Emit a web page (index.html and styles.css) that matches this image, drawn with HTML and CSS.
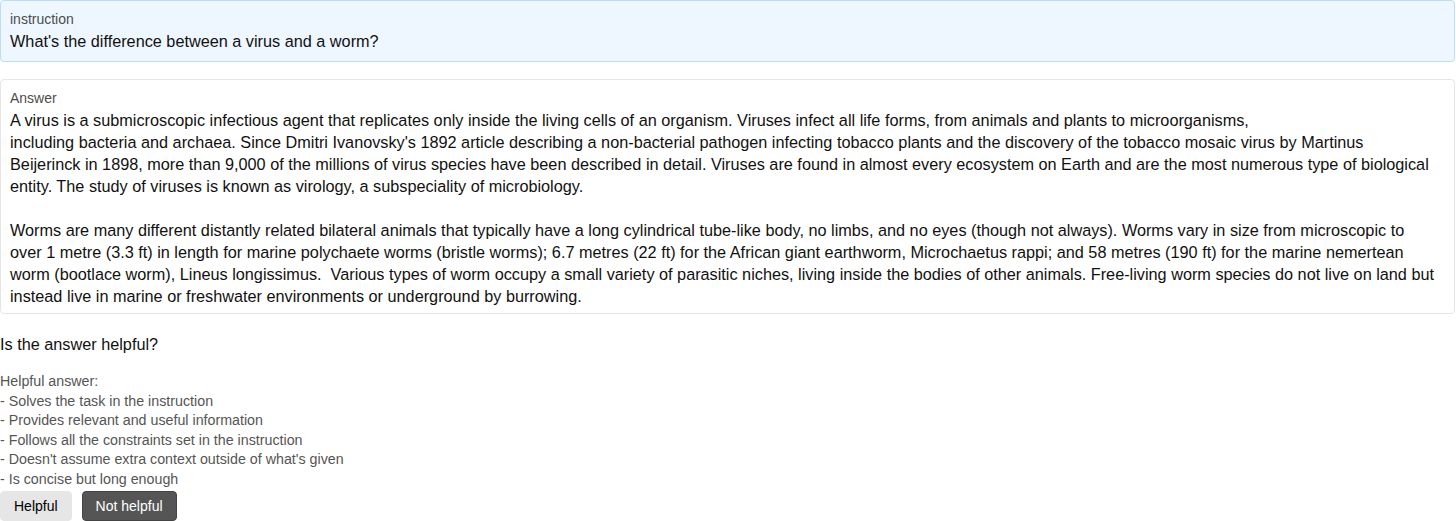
FILE: index.html
```html
<!DOCTYPE html>
<html lang="en">
<head>
<meta charset="utf-8">
<title>Answer evaluation</title>
<link rel="stylesheet" href="styles.css">
</head>
<body>
<main class="page">
  <section class="card card-instruction">
    <div class="label">instruction</div>
    <div class="text">What's the difference between a virus and a worm?</div>
  </section>
  <section class="card card-answer">
    <div class="label">Answer</div>
    <p class="text">A virus is a submicroscopic infectious agent that replicates only inside the living cells of an organism. Viruses infect all life forms, from animals and plants to microorganisms,<br>including bacteria and archaea. Since Dmitri Ivanovsky's 1892 article describing a non-bacterial pathogen infecting tobacco plants and the discovery of the tobacco mosaic virus by Martinus<br>Beijerinck in 1898, more than 9,000 of the millions of virus species have been described in detail. Viruses are found in almost every ecosystem on Earth and are the most numerous type of biological<br>entity. The study of viruses is known as virology, a subspeciality of microbiology.</p>
    <p class="text">Worms are many different distantly related bilateral animals that typically have a long cylindrical tube-like body, no limbs, and no eyes (though not always). Worms vary in size from microscopic to<br>over 1 metre (3.3 ft) in length for marine polychaete worms (bristle worms); 6.7 metres (22 ft) for the African giant earthworm, Microchaetus rappi; and 58 metres (190 ft) for the marine nemertean<br>worm (bootlace worm), Lineus longissimus.&nbsp; Various types of worm occupy a small variety of parasitic niches, living inside the bodies of other animals. Free-living worm species do not live on land but<br>instead live in marine or freshwater environments or underground by burrowing.</p>
  </section>
  <div class="question">Is the answer helpful?</div>
  <div class="hint">
    <div>Helpful answer:</div>
    <div>- Solves the task in the instruction</div>
    <div>- Provides relevant and useful information</div>
    <div>- Follows all the constraints set in the instruction</div>
    <div>- Doesn't assume extra context outside of what's given</div>
    <div>- Is concise but long enough</div>
  </div>
  <div class="buttons">
    <button class="btn btn-light" type="button">Helpful</button>
    <button class="btn btn-dark" type="button">Not helpful</button>
  </div>
</main>
</body>
</html>
```

FILE: styles.css
```css
html, body {
  margin: 0;
  padding: 0;
  background: #ffffff;
}

body {
  font-family: "Liberation Sans", Arial, sans-serif;
  color: #000000;
  overflow: hidden;
}

.page {
  display: flex;
  flex-direction: column;
  width: 1456px;
}

.card {
  box-sizing: border-box;
  width: 1455px;
  border-radius: 4px;
  border: 1px solid #e6e6e6;
}

.card-instruction {
  background: #eef7ff;
  border-color: #bcdcf3;
  padding: 7px 9px 9px;
}

.card-answer {
  background: #ffffff;
  margin-top: 17px;
  padding: 7px 9px 6px;
}

.label {
  font-size: 14px;
  line-height: 22px;
  color: #4d4d4d;
}

.text {
  margin: 0;
  font-size: 16.25px;
  line-height: 22px;
  white-space: nowrap;
  color: #111111;
}

.card-answer .text + .text {
  margin-top: 22px;
}

.question {
  margin-top: 19px;
  font-size: 16.25px;
  line-height: 22px;
  color: #111111;
}

.hint {
  margin-top: 17px;
  font-size: 14.25px;
  line-height: 19.6px;
  color: #555555;
}

.buttons {
  display: flex;
  gap: 10px;
  margin-top: 1px;
}

.btn {
  height: 30px;
  padding: 0 13px;
  border-radius: 4px;
  font-family: "Liberation Sans", Arial, sans-serif;
  font-size: 14px;
  cursor: pointer;
}

.btn-light {
  background: #e6e6e6;
  border: 1px solid #e6e6e6;
  color: #000000;
}

.btn-dark {
  background: #555555;
  border: 1px solid #444444;
  color: #ffffff;
}
```
